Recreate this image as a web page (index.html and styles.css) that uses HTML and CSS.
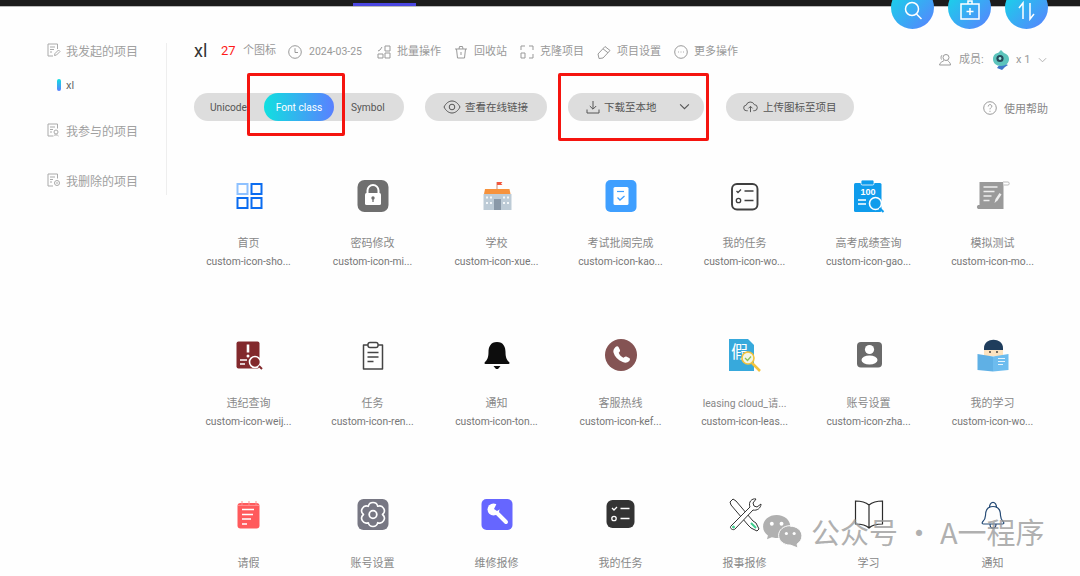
FILE: index.html
```html
<!DOCTYPE html>
<html lang="zh-CN">
<head>
<meta charset="utf-8">
<title>xl - 图标项目</title>
<link rel="stylesheet" href="styles.css">
</head>
<body>
<div class="page">
  <header class="topbar"><span class="topbar-tab"></span></header>
  <div class="content">
    <aside class="sidebar">
      <div class="side-item side-first">
        <svg class="side-icon" viewBox="0 0 14 14"><path d="M10.500 6V1H1v12h5M3 4h5M3 6.500h4M3 9h2M7.500 12.500l.5-2 3.500-3.500 1.500 1.500-3.500 3.500z"/></svg>
        <span>我发起的项目</span>
      </div>
      <div class="side-sub"><span class="side-bar"></span><span>xl</span></div>
      <div class="side-item side-join">
        <svg class="side-icon" viewBox="0 0 14 14"><path d="M10.500 5.500V1H1v12h5M3 4h5M3 6.500h3M3 9h2"/><circle cx="9" cy="9" r="2"/><path d="M6.500 13c.5-1.500 4.500-1.500 5 0"/></svg>
        <span>我参与的项目</span>
      </div>
      <div class="side-item side-del">
        <svg class="side-icon" viewBox="0 0 14 14"><path d="M10.500 5.500V1H1v12h5M3 4h5M3 6.500h3M3 9h2"/><circle cx="10" cy="10" r="2.500"/><path d="M9 10h2"/></svg>
        <span>我删除的项目</span>
      </div>
    </aside>

    <main class="main">
      <div class="title-row">
        <h1 class="project-name">xl</h1>
        <span class="count">27</span>
        <span class="meta-text count-label">个图标</span>
        <span class="meta-item meta-date">
          <svg class="meta-icon" viewBox="0 0 14 14"><circle cx="7" cy="7" r="6.300"/><path d="M7 3.200V7.500h3"/></svg>
          <span>2024-03-25</span>
        </span>
        <span class="meta-item">
          <svg class="meta-icon" viewBox="0 0 14 14"><path d="M8 1h5v5H8zM8 8h5v5H8zM1 13h5v-4H1zM1 6l2-1 2-3"/></svg>
          <span>批量操作</span>
        </span>
        <span class="meta-item">
          <svg class="meta-icon" viewBox="0 0 14 14"><path d="M1 4h12M5 4l.5-2.500h3L9 4M2.500 4l1 9h7l1-9M7 7v3"/></svg>
          <span>回收站</span>
        </span>
        <span class="meta-item">
          <svg class="meta-icon" viewBox="0 0 14 14"><path d="M1 5V1h4M9 1h4v4M13 9v4H9M5 13H1V8h4z"/></svg>
          <span>克隆项目</span>
        </span>
        <span class="meta-item">
          <svg class="meta-icon" viewBox="0 0 14 14"><path d="M1 9l7-7.500 5 4-7 7.500-4 .500zM6 3.800l5 4"/></svg>
          <span>项目设置</span>
        </span>
        <span class="meta-item">
          <svg class="meta-icon" viewBox="0 0 14 14"><circle cx="7" cy="7" r="6.300"/><path d="M4 7h.8M6.600 7h.8M9.200 7h.8"/></svg>
          <span>更多操作</span>
        </span>
        <span class="members">
          <svg class="meta-icon" viewBox="0 0 14 14"><circle cx="8" cy="4.500" r="3"/><path d="M6 7.500c-1 1-4.500 2-4.500 4.500h11c0-2.500-2-3.500-3-4.500M4 2.200C2.800 3 2.800 5.500 3.500 6.500"/></svg>
          <span class="members-label">成员:</span>
          <svg class="avatar" viewBox="0 0 16 20"><path d="M4 18c2-4 8-5 11-3l-3 2-3 3z" fill="#3d78c9"/><path d="M8 0l3 3c3 1 5 3 5 6 0 4-3 7-8 7S0 13 0 9s3-6 5-6z" fill="#5cc4bc"/><circle cx="7" cy="8.500" r="3.600" fill="#27495a"/><circle cx="7" cy="8.500" r="1.400" fill="#9fe8e0"/></svg>
          <span class="members-count">x 1</span>
          <svg class="chev-small" viewBox="0 0 10 6"><path d="M1 1l4 4 4-4"/></svg>
        </span>
      </div>

      <div class="toolbar">
        <div class="segment">
          <span class="seg-item seg-unicode">Unicode</span>
          <span class="seg-item seg-active">Font class</span>
          <span class="seg-item seg-symbol">Symbol</span>
        </div>
        <button class="pill pill-link">
          <svg class="pill-icon" viewBox="0 0 18 14"><path d="M1 7c2-4 5-6 8-6s6 2 8 6c-2 4-5 6-8 6S3 11 1 7z"/><circle cx="9" cy="7" r="2.800"/></svg>
          <span>查看在线链接</span>
        </button>
        <button class="pill pill-download">
          <svg class="pill-icon-sq" viewBox="0 0 14 14"><path d="M7 1v8M3.800 6L7 9.200 10.200 6M1 9.500V13h12V9.500"/></svg>
          <span>下载至本地</span>
          <svg class="chev" viewBox="0 0 10 6"><path d="M1 1l4 4 4-4"/></svg>
        </button>
        <button class="pill pill-upload">
          <svg class="pill-icon-up" viewBox="0 0 16 13"><path d="M5 11H4a3 3 0 0 1-.5-6A4.500 4.500 0 0 1 12 4.500a3.200 3.200 0 0 1 0 6.500h-1M8 12.500V6.500M5.800 8.500L8 6.300l2.200 2.200"/></svg>
          <span>上传图标至项目</span>
        </button>
        <span class="help">
          <svg class="meta-icon" viewBox="0 0 14 14"><circle cx="7" cy="7" r="6.300"/><path d="M5.200 5.500C5.200 3 8.800 3 8.800 5.300 8.800 6.700 7 6.700 7 8.300M7 9.800v1"/></svg>
          <span>使用帮助</span>
        </span>
      </div>

      <div class="icon-grid">
        <div class="cell">
          <svg class="glyph" viewBox="0 0 40 40"><g fill="none" stroke-width="2"><rect x="8.500" y="8" width="10" height="10" stroke="#8ec1ff"/><rect x="22.500" y="8" width="10" height="10" stroke="#0b6cf0"/><rect x="8.500" y="22" width="10" height="10" stroke="#0b6cf0"/><rect x="22.500" y="22" width="10" height="10" stroke="#0b6cf0"/></g></svg>
          <div class="name">首页</div><div class="code">custom-icon-sho...</div>
        </div>
        <div class="cell">
          <svg class="glyph" viewBox="0 0 40 40"><rect x="4.500" y="4" width="31" height="32" rx="7" fill="#6f6f6f"/><path d="M14.500 18v-3.500a5.500 5.500 0 0 1 11 0V18" fill="none" stroke="#fff" stroke-width="2"/><rect x="12" y="17" width="16" height="12" rx="1.500" fill="#fff"/><circle cx="20" cy="22" r="1.700" fill="#6f6f6f"/><path d="M20 22v4" stroke="#6f6f6f" stroke-width="1.300"/></svg>
          <div class="name">密码修改</div><div class="code">custom-icon-mi...</div>
        </div>
        <div class="cell">
          <svg class="glyph" viewBox="0 0 40 40"><path d="M20 6v8" stroke="#c96a4a" stroke-width=".8"/><path d="M20 6h5.500L24 7.500 25.500 9H20z" fill="#f2583e"/><path d="M8 13h24.500l1 5H7z" fill="#f6923c"/><rect x="6.500" y="18" width="28" height="16" fill="#bdcbd6"/><rect x="17" y="23" width="7" height="11" fill="#8a99a8"/><g fill="#f4f7f9"><rect x="9" y="20.500" width="2" height="2"/><rect x="13" y="20.500" width="2" height="2"/><rect x="26" y="20.500" width="2" height="2"/><rect x="30" y="20.500" width="2" height="2"/><rect x="9" y="26" width="2" height="2"/><rect x="13" y="26" width="2" height="2"/><rect x="26" y="26" width="2" height="2"/><rect x="30" y="26" width="2" height="2"/></g></svg>
          <div class="name">学校</div><div class="code">custom-icon-xue...</div>
        </div>
        <div class="cell">
          <svg class="glyph" viewBox="0 0 40 40"><rect x="4.500" y="4" width="31" height="32" rx="5" fill="#3f9fff"/><rect x="12.500" y="11" width="15" height="18" rx="1.500" fill="#fff"/><path d="M16 15.500h7" stroke="#3f9fff" stroke-width="1.200"/><path d="M16.500 21.500l2.500 2.500 4.500-4" fill="none" stroke="#3f9fff" stroke-width="1.300"/></svg>
          <div class="name">考试批阅完成</div><div class="code">custom-icon-kao...</div>
        </div>
        <div class="cell">
          <svg class="glyph" viewBox="0 0 40 40"><rect x="7" y="8" width="25.500" height="25.500" rx="5" fill="none" stroke="#3f3f3f" stroke-width="1.900"/><path d="M11.500 15l1.500 1.500 3-3" fill="none" stroke="#3f3f3f" stroke-width="1.300"/><circle cx="13.500" cy="24.500" r="2.200" fill="none" stroke="#3f3f3f" stroke-width="1.300"/><path d="M19.500 15h9M19.500 24.500h9" stroke="#3f3f3f" stroke-width="1.500"/></svg>
          <div class="name">我的任务</div><div class="code">custom-icon-wo...</div>
        </div>
        <div class="cell">
          <svg class="glyph" viewBox="0 0 40 40"><rect x="5" y="7" width="27.500" height="29" rx="1.500" fill="#0f9cec"/><rect x="12" y="4" width="13" height="5" rx="1.500" fill="#0f9cec" stroke="#fff" stroke-width=".8"/><text x="19" y="19" class="svg-hundred">100</text><path d="M9 24h8M9 28h8" stroke="#fff" stroke-width="1.700"/><circle cx="26.500" cy="27.500" r="6" fill="#0f9cec" stroke="#fff" stroke-width="1.600"/><path d="M30.500 32l4 4" stroke="#0f9cec" stroke-width="2"/></svg>
          <div class="name">高考成绩查询</div><div class="code">custom-icon-gao...</div>
        </div>
        <div class="cell">
          <svg class="glyph" viewBox="0 0 40 40"><path d="M6.500 6h24v27H5c-1.500-1-1.500-3 0-4h1.500z" fill="#9a9a9a"/><path d="M30 6h5c1.500 0 1.500 2 .5 3H31" fill="#fff" stroke="#aaa" stroke-width=".8"/><path d="M10.500 11h14M10.500 15.500h11M10.500 20h8M10.500 24.500h6" stroke="#eee" stroke-width="1.500"/><path d="M21.500 27l1-4 4-6 2 1.500-4 6z" fill="#eee"/></svg>
          <div class="name">模拟测试</div><div class="code">custom-icon-mo...</div>
        </div>

        <div class="cell">
          <svg class="glyph" viewBox="0 0 40 40"><rect x="7.500" y="5.500" width="23" height="27" rx="2" fill="#82292c"/><path d="M19 8.500v8" stroke="#fff" stroke-width="2.600"/><circle cx="19" cy="20" r="1.500" fill="#fff"/><path d="M11 24h7M11 28h5" stroke="#fff" stroke-width="1.500"/><circle cx="26" cy="26" r="5.500" fill="#82292c" stroke="#fff" stroke-width="1.600"/><path d="M30 30l3 3" stroke="#82292c" stroke-width="2"/></svg>
          <div class="name">违纪查询</div><div class="code">custom-icon-weij...</div>
        </div>
        <div class="cell">
          <svg class="glyph" viewBox="0 0 40 40"><path d="M15 9h-4.500v24h19V9H25" fill="none" stroke="#444" stroke-width="1.500" stroke-linejoin="round"/><rect x="15" y="6.500" width="10" height="5" rx="2" fill="#fff" stroke="#444" stroke-width="1.400"/><path d="M14.500 16.500h11M14.500 21h11M14.500 25.500h6" stroke="#444" stroke-width="1.300"/></svg>
          <div class="name">任务</div><div class="code">custom-icon-ren...</div>
        </div>
        <div class="cell">
          <svg class="glyph" viewBox="0 0 40 40"><path d="M20 6c-6.500 0-8.500 5-8.500 10 0 6-1.500 8-3.500 10-1 1-.5 2 .5 2h23c1 0 1.500-1 .5-2-2-2-3.500-4-3.500-10 0-5-2-10-8.500-10z" fill="#0d0d0d"/><path d="M16.500 30h7l-2.500 3h-2z" fill="#0d0d0d"/></svg>
          <div class="name">通知</div><div class="code">custom-icon-ton...</div>
        </div>
        <div class="cell">
          <svg class="glyph" viewBox="0 0 40 40"><circle cx="20" cy="19" r="16" fill="#845353"/><path d="M14.500 11c1-1 2.500-1 3 0l1.500 3c.4 1-.5 2-1.300 2.800.8 2.300 2.500 4 4.700 5 .8-.8 1.800-1.700 2.800-1.300l3 1.500c1 .5 1 2 0 3-2 2-4 2-6.500 1-5-2-8-5.500-9.200-9.500-.6-2.300.5-4 2-5.500z" fill="#fff"/></svg>
          <div class="name">客服热线</div><div class="code">custom-icon-kef...</div>
        </div>
        <div class="cell">
          <svg class="glyph" viewBox="0 0 40 40"><path d="M4 3h19l6 6v26H4z" fill="#37a9dc"/><text x="6" y="22" class="svg-jia">假</text><path d="M27 27l8 8" stroke="#f5c33b" stroke-width="2.500"/><circle cx="23" cy="22" r="6" fill="#f2f6e8" stroke="#f5c33b" stroke-width="1.600"/><path d="M20 22l2.500 2.500 3.500-4" fill="none" stroke="#8cc152" stroke-width="1.200"/></svg>
          <div class="name name-latin">leasing cloud_请...</div><div class="code">custom-icon-leas...</div>
        </div>
        <div class="cell">
          <svg class="glyph" viewBox="0 0 40 40"><rect x="8" y="6" width="25" height="25.500" rx="4" fill="#6a6a6a"/><circle cx="20.500" cy="13.500" r="4.600" fill="#fff"/><ellipse cx="20.500" cy="24" rx="8" ry="4.500" fill="#fff"/></svg>
          <div class="name">账号设置</div><div class="code">custom-icon-zha...</div>
        </div>
        <div class="cell">
          <svg class="glyph" viewBox="0 0 40 40"><path d="M11 12c0-11 19-11 19 0v3H11z" fill="#1f3d5c"/><path d="M11 14h19v6H11z" fill="#fde3bf"/><circle cx="17" cy="16" r=".9" fill="#333"/><circle cx="24" cy="16" r=".9" fill="#333"/><path d="M4.500 18l15.500 2.500v15L4.500 34z" fill="#5fb0e5"/><path d="M35.500 18L20 20.500v15L35.500 34z" fill="#6dbcee"/><path d="M25 22.500h7M25 25.500h7M25 28.500h5" stroke="#e6f4fc" stroke-width="1"/></svg>
          <div class="name">我的学习</div><div class="code">custom-icon-wo...</div>
        </div>

        <div class="cell">
          <svg class="glyph" viewBox="0 0 40 40"><rect x="8.500" y="7" width="22" height="25.500" rx="3" fill="#ff5a5c"/><path d="M13 5v4M20 5v4M27 5v4M9 9.500h21" stroke="#ff8d8e" stroke-width="1"/><path d="M13 13.500h12M13 18.500h11M13 23h9M13 28h5" stroke="#fff" stroke-width="1.500"/></svg>
          <div class="name">请假</div>
        </div>
        <div class="cell">
          <svg class="glyph" viewBox="0 0 40 40"><rect x="4.500" y="3" width="31" height="31" rx="6" fill="#777783"/><path d="M29.500 18.500A4.800 4.800 0 0 1 24.700 26.700 4.800 4.800 0 0 1 15.300 26.700 4.800 4.800 0 0 1 10.500 18.500 4.800 4.800 0 0 1 15.300 10.300 4.800 4.800 0 0 1 24.700 10.300 4.800 4.800 0 0 1 29.500 18.500Z" fill="none" stroke="#fff" stroke-width="1.600" stroke-linejoin="round"/><circle cx="20" cy="18.500" r="3.800" fill="none" stroke="#fff" stroke-width="1.800"/></svg>
          <div class="name">账号设置</div>
        </div>
        <div class="cell">
          <svg class="glyph" viewBox="0 0 40 40"><rect x="4.500" y="3" width="31" height="31" rx="5" fill="#6666ff"/><path d="M20 17l9 9" stroke="#fff" stroke-width="4" stroke-linecap="round"/><circle cx="16.500" cy="13.500" r="6" fill="#fff"/><path d="M17 13l3-6 5 5-5 3z" fill="#6666ff"/></svg>
          <div class="name">维修报修</div>
        </div>
        <div class="cell">
          <svg class="glyph" viewBox="0 0 40 40"><rect x="5.500" y="4" width="28" height="28" rx="6" fill="#333"/><path d="M11 12l2 2 3-3" fill="none" stroke="#fff" stroke-width="1.300"/><circle cx="13" cy="22.500" r="2.200" fill="none" stroke="#fff" stroke-width="1.300"/><path d="M19.500 12.500h9M19.500 22.500h9" stroke="#fff" stroke-width="1.700"/></svg>
          <div class="name">我的任务</div>
        </div>
        <div class="cell">
          <svg class="glyph" viewBox="0 0 40 40"><g fill="none" stroke="#333" stroke-width="1" stroke-linejoin="round"><path d="M5 6l3-3 3 2 17 20 3 2 3 6-2 2-6-3-3-3L6 9z" fill="#fff"/><path d="M26 27l5 5" stroke="#3fd08f" stroke-width="2"/><path d="M6 30c-2 2 2 5 4 3L28 14c4 1 8-2 8-6l-4 3-3-1-1-3 3-4c-4-1-8 3-6 8z" fill="#fff"/><circle cx="8.500" cy="31" r="1" fill="#3fd08f" stroke="#3fd08f"/></g></svg>
          <div class="name">报事报修</div>
        </div>
        <div class="cell">
          <svg class="glyph" viewBox="0 0 40 40"><path d="M20 9C17 6.500 13 5 6.500 5v23c6.500 0 10.500 1 13.500 4 3-3 7-4 13.500-4V5C27 5 23 6.500 20 9zM20 9v23" fill="none" stroke="#2b2b2b" stroke-width="1.200"/></svg>
          <div class="name">学习</div>
        </div>
        <div class="cell">
          <svg class="glyph" viewBox="0 0 40 40"><path d="M16.500 12c-.5-7.500 7.500-7.500 7 0M20 10.500c-6.500 0-7.500 5-7.500 9 0 3.500-2 5.500-3 6.500-.8 1.200 0 2 1 2h19c1 0 1.800-.8 1-2-1-1-3-3-3-6.500 0-4-1-9-7.500-9zM17 28c0 5.500 6 5.500 6 0" fill="none" stroke="#254a75" stroke-width="1.200"/></svg>
          <div class="name">通知</div>
        </div>
      </div>
    </main>
  </div>

  <div class="float-actions">
    <span class="float-btn"><svg viewBox="0 0 24 24"><circle cx="11" cy="10" r="6.500"/><path d="M15.500 15l5 5"/></svg></span>
    <span class="float-btn"><svg viewBox="0 0 24 24"><path d="M3 5h18v15H3zM12 9v7M8.500 12.500h7M10 5V2h4v3"/></svg></span>
    <span class="float-btn"><svg viewBox="0 0 24 24"><path d="M8 20V4L4 9M15 4v16l4-5"/></svg></span>
  </div>

  <span class="mark mark-font"></span>
  <span class="mark mark-download"></span>

  <div class="watermark">
    <svg class="wm-logo" viewBox="0 0 42 34"><path d="M15 0C7 0 1 5 1 12c0 4 2 7 5 9l-1 4 5-2c2 .5 3 .7 5 .7 8 0 14-5.500 14-12S23 0 15 0z" fill="#b0b0b0"/><path d="M29 11c-7 0-12 4.500-12 10s5 10 12 10l4 1.500 4 1.500-1-4c3-2 5-5 5-8.500 0-5.500-5-10-12-10z" fill="#b0b0b0" stroke="#fff" stroke-width="1"/><circle cx="10" cy="9" r="2" fill="#fff"/><circle cx="20" cy="9" r="2" fill="#fff"/><circle cx="25" cy="19" r="1.600" fill="#fff"/><circle cx="33" cy="19" r="1.600" fill="#fff"/></svg>
    <span>公众号 · A一程序</span>
  </div>
</div>
</body>
</html>
```

FILE: styles.css
```css
* { box-sizing: border-box; }
html, body { margin: 0; padding: 0; }
body {
  background: #fefefe;
  color: #888;
  font-family: Roboto, "Noto Sans CJK SC", sans-serif;
  font-size: 12px;
}
.page {
  position: relative;
  width: 1080px;
  height: 576px;
  overflow: hidden;
}
.topbar {
  height: 7px;
  background: #1c1c1c;
  border-bottom: 1px solid #bbb;
  padding-left: 353px;
}
.topbar-tab {
  display: block;
  width: 63px;
  height: 3px;
  position: relative;
  top: 3px;
  background: #4a46e0;
}
.content { display: flex; align-items: flex-start; }

.sidebar {
  width: 167px;
  height: 152px;
  margin-top: 36px;
  border-right: 1px solid #eee;
  padding-left: 47px;
  color: #a0a0a0;
  font-size: 12px;
  flex: none;
}
.side-item { display: flex; align-items: center; gap: 5px; height: 20px; padding-bottom: 2px; }
.side-first { margin-top: -2px; }
.side-icon { width: 14px; height: 14px; fill: none; stroke: #aaa; stroke-width: 1; flex: none; }
.side-sub {
  display: flex;
  align-items: center;
  gap: 5px;
  height: 16px;
  margin: 17px 0 0 10px;
  padding-bottom: 2px;
  font-size: 11px;
  color: #666;
}
.side-bar {
  width: 4px;
  height: 12px;
  border-radius: 2px;
  background: linear-gradient(180deg, #10e0e0, #5a80ff);
}
.side-join { margin-top: 27px; }
.side-del { margin-top: 30px; }

.main { flex: 1; min-width: 0; padding: 34px 32px 0 27px; }
.title-row { display: flex; align-items: flex-start; height: 20px; color: #999; font-size: 11px; line-height: 20px; }
.project-name { margin: 0; font-size: 18px; font-weight: 400; color: #333; line-height: 20px; width: 27px; }
.count { color: #ff1a1a; font-size: 13px; width: 22px; }
.meta-text { color: #999; }
.count-label { width: 45px; }
.meta-item { display: flex; align-items: center; gap: 6px; height: 20px; margin-top: 1px; margin-right: 13px; }
.meta-date { gap: 7px; margin-right: 15px; font-size: 10.500px; }
.meta-icon { width: 14px; height: 14px; fill: none; stroke: #999; stroke-width: 1; flex: none; }
.members { display: flex; align-items: center; margin-left: auto; margin-top: 9px; margin-right: 1px; height: 20px; font-size: 11px; }
.members-label { margin-left: 7px; width: 34px; }
.avatar { width: 16px; height: 20px; }
.members-count { margin-left: 7px; width: 22px; }
.chev-small { width: 9px; height: 6px; fill: none; stroke: #aaa; stroke-width: 1; }

.toolbar { display: flex; align-items: center; margin-top: 32px; height: 28px; color: #555; font-size: 10.500px; }
.segment {
  display: flex;
  align-items: center;
  width: 210px;
  height: 28px;
  border-radius: 14px;
  background: #ddd;
  font-size: 10.200px;
}
.seg-item { display: block; line-height: 29px; }
.seg-unicode { width: 70px; padding-left: 16px; }
.seg-active {
  width: 70px;
  height: 28px;
  border-radius: 14px;
  text-align: center;
  color: #fff;
  background: linear-gradient(90deg, #10e0e0, #5a80ff);
}
.seg-symbol { padding-left: 17px; }
.pill {
  display: flex;
  align-items: center;
  height: 28px;
  border: 0;
  border-radius: 14px;
  background: #ddd;
  color: #555;
  font: inherit;
  padding: 0 0 1px;
}
.pill-icon { width: 18px; height: 14px; fill: none; stroke: #555; stroke-width: 1; }
.pill-icon-sq { width: 14px; height: 14px; fill: none; stroke: #555; stroke-width: 1; }
.pill-icon-up { width: 15px; height: 13px; fill: none; stroke: #555; stroke-width: 1; }
.pill-link { width: 122px; margin-left: 21px; padding-left: 18px; gap: 4px; }
.pill-download { width: 136px; margin-left: 21px; padding-left: 18px; gap: 4px; }
.pill-upload { width: 128px; margin-left: 22px; padding-left: 17px; gap: 5px; }
.chev { width: 11px; height: 7px; margin-left: 18px; fill: none; stroke: #555; stroke-width: 1; }
.help { display: flex; align-items: center; gap: 7px; margin-left: auto; margin-top: 2px; color: #888; font-size: 11px; }

.icon-grid {
  display: grid;
  grid-template-columns: repeat(7, 124px);
  grid-auto-rows: 160px;
  margin: 55px 0 0 -7.500px;
}
.cell { display: flex; flex-direction: column; align-items: center; min-width: 0; }
.glyph { width: 40px; height: 40px; flex: none; }
.name, .code {
  text-align: center;
  white-space: nowrap;
}
.name { margin-top: 18px; line-height: 19px; color: #888; font-size: 11px; }
.name-latin { font-size: 10.300px; }
.code { line-height: 18px; color: #777; font-size: 10.300px; }
.svg-hundred { font-family: "Liberation Sans", sans-serif; font-size: 9px; font-weight: 700; fill: #fff; text-anchor: middle; }
.svg-jia { font-family: "Noto Sans CJK SC", sans-serif; font-size: 17px; fill: #fff; }

.float-actions { position: absolute; top: -14px; right: 32px; display: flex; gap: 14px; }
.float-btn {
  display: flex;
  align-items: center;
  justify-content: center;
  width: 43px;
  height: 43px;
  padding-top: 6px;
  border-radius: 50%;
  background: linear-gradient(135deg, #10dde6, #5a80ff);
}
.float-btn svg { width: 24px; height: 24px; fill: none; stroke: #fff; stroke-width: 1.500; }

.mark { position: absolute; border: 3px solid #f5140f; border-radius: 2px; }
.mark-font { left: 247px; top: 73px; width: 98px; height: 63px; }
.mark-download { left: 558px; top: 73px; width: 151px; height: 68px; }

.watermark {
  position: absolute;
  left: 762px;
  top: 508px;
  display: flex;
  align-items: center;
  gap: 8px;
  height: 46px;
  font-family: "Noto Sans CJK SC", sans-serif;
  font-size: 29px;
  color: rgba(150, 150, 150, 0.75);
  white-space: nowrap;
}
.wm-logo { width: 41px; height: 33px; }
```
